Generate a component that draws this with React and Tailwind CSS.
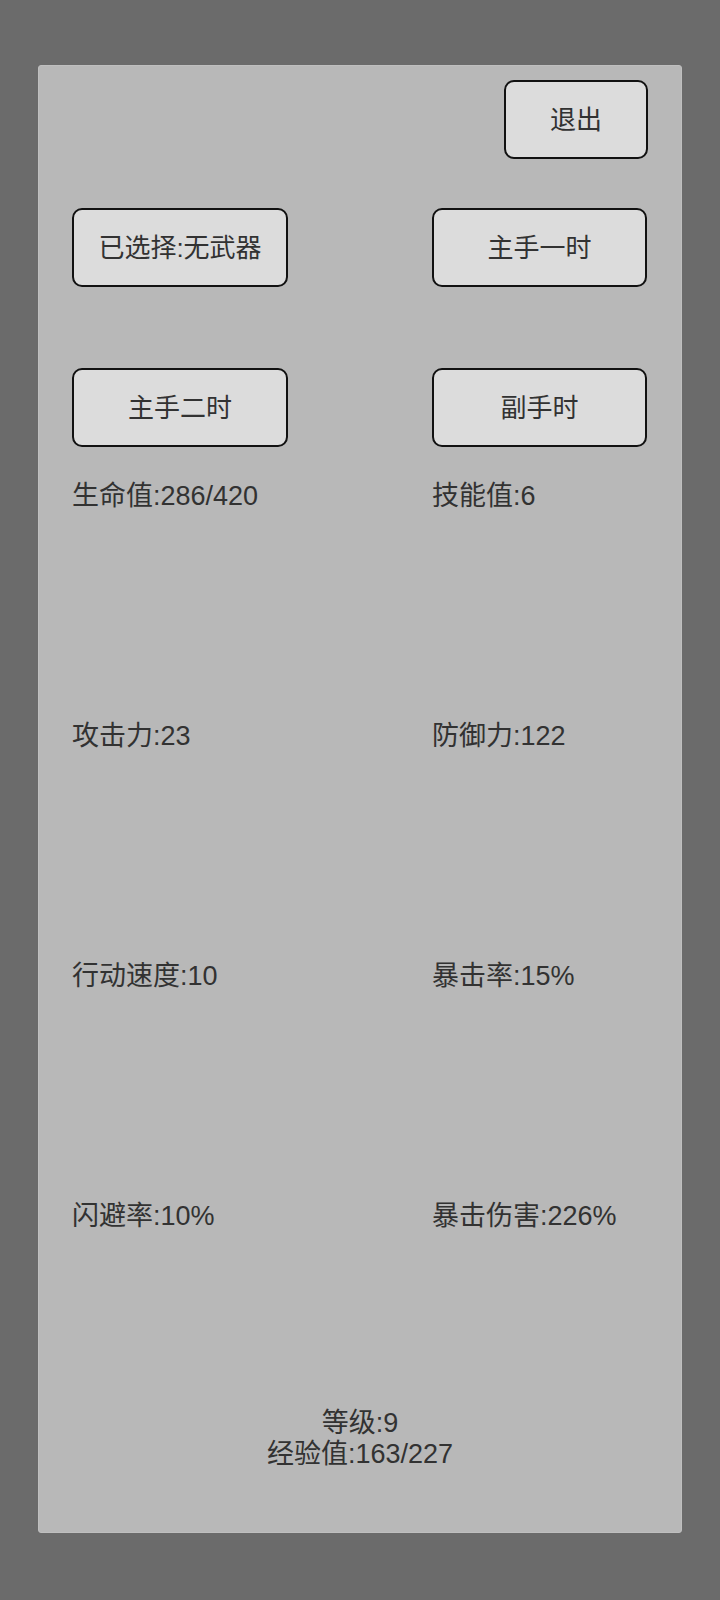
import React from "react";

const font = { fontFamily: '"Liberation Sans", "Noto Sans CJK SC", sans-serif' };

function Btn({ children, className = "" }) {
  return (
    <button
      className={`h-[79px] rounded-[10px] border-2 border-[#111] bg-[#dcdcdc] text-[26px] leading-none text-[#323232] ${className}`}
    >
      {children}
    </button>
  );
}

function Stat({ children }) {
  return <div className="text-[27px] leading-[30px] text-[#323232] whitespace-nowrap">{children}</div>;
}

export default function App() {
  return (
    <div className="min-h-[1600px] w-[720px] bg-[#6b6b6b] pt-[65px] px-[38px]" style={font}>
      <div className="h-[1468px] rounded-[3px] border border-[#bfbfbf] bg-[#b8b8b8] px-[33px] pt-[14px] flex flex-col">
        <div className="flex justify-end">
          <Btn className="w-[144px]">退出</Btn>
        </div>
        <div className="mt-[49px] grid grid-cols-[360px_1fr]">
          <Btn className="w-[216px]">已选择:无武器</Btn>
          <Btn className="w-[215px]">主手一时</Btn>
        </div>
        <div className="mt-[81px] grid grid-cols-[360px_1fr]">
          <Btn className="w-[216px]">主手二时</Btn>
          <Btn className="w-[215px]">副手时</Btn>
        </div>
        <div className="mt-[34px] grid grid-cols-[360px_1fr] gap-y-[210px]">
          <Stat>生命值:286/420</Stat>
          <Stat>技能值:6</Stat>
          <Stat>攻击力:23</Stat>
          <Stat>防御力:122</Stat>
          <Stat>行动速度:10</Stat>
          <Stat>暴击率:15%</Stat>
          <Stat>闪避率:10%</Stat>
          <Stat>暴击伤害:226%</Stat>
        </div>
        <div className="mt-[177px] flex flex-col items-center text-[27px] leading-[31px] text-[#323232]">
          <div>等级:9</div>
          <div>经验值:163/227</div>
        </div>
      </div>
    </div>
  );
}
